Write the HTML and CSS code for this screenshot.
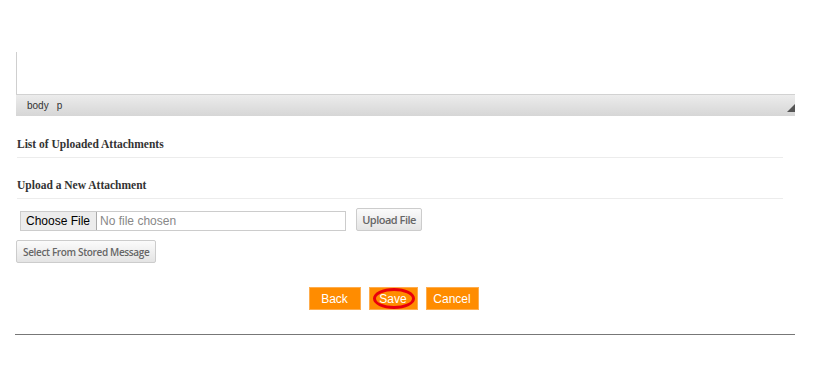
FILE: index.html
```html
<!DOCTYPE html>
<html lang="en">
<head>
    <meta charset="UTF-8">
    <meta name="viewport" content="width=device-width, initial-scale=1.0">
    <title>Attachments</title>
    <link rel="stylesheet" href="styles.css">
</head>
<body>
    <div class="page">
        <div class="editor">
            <div class="editor-body"></div>
            <div class="status-bar">
                <span>body</span>
                <span>p</span>
                <span class="resize"></span>
            </div>
        </div>

        <h3 class="section-title">List of Uploaded Attachments</h3>
        <h3 class="section-title">Upload a New Attachment</h3>

        <div class="upload-row">
            <input type="file" class="file-input">
            <button class="grey-button upload">Upload File</button>
        </div>
        <div class="stored-row">
            <button class="grey-button">Select From Stored Message</button>
        </div>

        <div class="actions">
            <button class="orange-button back">Back</button>
            <button class="orange-button save">Save<span class="mark"></span></button>
            <button class="orange-button cancel">Cancel</button>
        </div>

        <hr class="divider">
    </div>
</body>
</html>
```

FILE: styles.css
```css
body {
    margin: 0;
    padding: 0;
    background: #fff;
    font-family: "Liberation Sans", Arial, sans-serif;
}
.page {
    width: 779px;
    padding: 52px 0 0 16px;
}
.editor-body {
    height: 42px;
    border-left: 1px solid #cfcfcf;
    background: #fff;
}
.status-bar {
    position: relative;
    height: 21px;
    border-top: 1px solid #d2d2d2;
    background: linear-gradient(to bottom, #ececec, #d6d6d6);
    display: flex;
    align-items: center;
    gap: 8px;
    padding-left: 11px;
    font-size: 10px;
    color: #333;
}
.resize {
    position: absolute;
    right: 0;
    bottom: 4px;
    width: 0;
    height: 0;
    border-left: 8px solid transparent;
    border-bottom: 8px solid #555;
}
.section-title {
    font-family: "Liberation Serif", "Times New Roman", serif;
    font-size: 11.5px;
    line-height: 14px;
    font-weight: bold;
    color: #333;
    margin: 0 12px 0 1px;
    padding: 21px 0 6px 0;
    border-bottom: 1px solid #ececec;
}
.section-title + .section-title {
    padding-top: 20px;
}
.upload-row {
    display: flex;
    align-items: flex-start;
    gap: 10px;
    margin-top: 9px;
    padding-left: 4px;
}
.file-input {
    width: 326px;
    height: 20px;
    margin-top: 3px;
    border: 1px solid #ccc;
    box-sizing: border-box;
    font-family: "Liberation Sans", Arial, sans-serif;
    font-size: 12px;
    color: #888;
    padding: 0;
}
.file-input::file-selector-button {
    height: 18px;
    margin: 0 3px 0 0;
    padding: 0 6px 0 5px;
    border: none;
    border-right: 1px solid #aaa;
    background: #ececec;
    color: #000;
    font-family: "Liberation Sans", Arial, sans-serif;
    font-size: 12px;
}
.grey-button {
    height: 23px;
    padding: 0 6px;
    border: 1px solid #ccc;
    border-radius: 2px;
    background: linear-gradient(to bottom, #fbfbfb, #e4e4e4);
    color: #666;
    font-family: "Open Sans", sans-serif;
    font-size: 10px;
    font-weight: 600;
    letter-spacing: -0.35px;
}
.grey-button.upload {
    width: 66px;
    padding: 0;
    font-size: 11px;
    letter-spacing: -0.5px;
}
.stored-row {
    margin-top: 9px;
}
.actions {
    display: flex;
    justify-content: center;
    gap: 8px;
    margin-top: 24px;
    padding-right: 24px;
}
.orange-button {
    position: relative;
    height: 23px;
    padding: 0;
    border: 1px solid #ffad4d;
    background: #ff8c00;
    color: #fff;
    font-family: "Liberation Sans", Arial, sans-serif;
    font-size: 12px;
}
.back {
    width: 52px;
}
.save {
    width: 49px;
}
.cancel {
    width: 53px;
}
.mark {
    position: absolute;
    left: 3px;
    top: 0;
    width: 42px;
    height: 21px;
    border: 3px solid #e8000b;
    border-radius: 50%;
    box-sizing: border-box;
}
.divider {
    margin: 24px 0 0 -1px;
    border: none;
    border-top: 1px solid #777;
    width: 780px;
}
```
